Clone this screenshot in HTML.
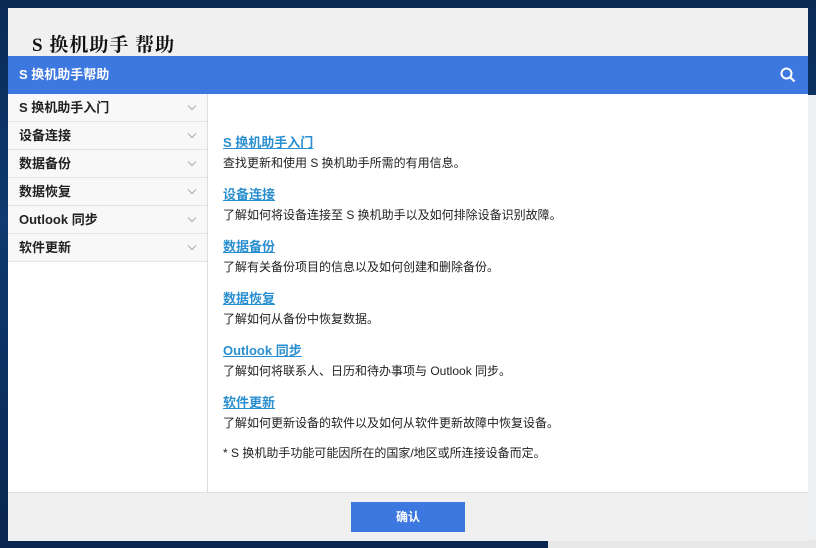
<!DOCTYPE html>
<html><head><meta charset="utf-8"><style>
body{margin:0;width:816px;height:548px;overflow:hidden;background:linear-gradient(180deg,#0a2a55 0%,#0d3a70 40%,#0a2650 100%);position:relative;font-family:"Liberation Sans","Noto Sans CJK SC",sans-serif}
.rw{position:absolute;left:808px;top:95px;width:8px;height:453px;background:#eef0f2}
.bot{position:absolute;left:548px;top:540px;width:268px;height:8px;background:#e8e8e8}
.win{position:absolute;left:8px;top:8px;width:800px;height:532px;background:#fff}
.tb{height:48px;background:#f0f0f0;position:relative}
.tb span{position:absolute;left:24px;top:22px;font-size:19px;font-weight:bold;font-family:"Liberation Serif","Noto Serif CJK SC",serif;color:#111;letter-spacing:1px}
.bb{height:38px;background:#3d78e0;color:#fff;font-weight:bold;font-size:13px;line-height:38px;padding-left:11px;position:relative}
.side{position:absolute;left:0;top:86px;width:199px;height:398px;border-right:1px solid #ddd;background:#fff}
.it{height:27px;border-bottom:1px solid #e4e4e4;background:#f8f8f8;font-size:13px;font-weight:bold;color:#222;line-height:27px;padding-left:11px;position:relative}
.it:after{content:"";position:absolute;right:12px;top:9px;width:5px;height:5px;border-right:1px solid #aaa;border-bottom:1px solid #aaa;transform:rotate(45deg)}
.ct{position:absolute;left:215px;top:124px;font-size:12px;color:#222}
.ct a{display:block;color:#2a8fd0;font-weight:bold;font-size:13px;text-decoration:underline;height:22px}
.ct p{margin:0 0 12px 0;height:18px}
.ft{position:absolute;left:0;top:484px;width:800px;height:48px;background:#f0f0f0;border-top:1px solid #e0e0e0}
.btn{position:absolute;left:343px;top:9px;width:114px;height:30px;background:#3d78e0;color:#fff;font-size:12px;font-weight:bold;text-align:center;line-height:30px}
</style></head><body>
<div class="rw"></div><div class="bot"></div>
<div class="win">
<div class="tb"><span>S 换机助手 帮助</span></div>
<div class="bb">S 换机助手帮助
<svg style="position:absolute;right:12px;top:11px" width="16" height="16" viewBox="0 0 16 16"><circle cx="6.5" cy="6.5" r="5" fill="none" stroke="#fff" stroke-width="2"/><path d="M10 10l4.5 4.5" stroke="#fff" stroke-width="2.2"/></svg></div>
<div class="side">
<div class="it">S 换机助手入门</div><div class="it">设备连接</div><div class="it">数据备份</div><div class="it">数据恢复</div><div class="it">Outlook 同步</div><div class="it">软件更新</div>
</div>
<div class="ct">
<a>S 换机助手入门</a><p>查找更新和使用 S 换机助手所需的有用信息。</p>
<a>设备连接</a><p>了解如何将设备连接至 S 换机助手以及如何排除设备识别故障。</p>
<a>数据备份</a><p>了解有关备份项目的信息以及如何创建和删除备份。</p>
<a>数据恢复</a><p>了解如何从备份中恢复数据。</p>
<a>Outlook 同步</a><p>了解如何将联系人、日历和待办事项与 Outlook 同步。</p>
<a>软件更新</a><p>了解如何更新设备的软件以及如何从软件更新故障中恢复设备。</p>
<p>* S 换机助手功能可能因所在的国家/地区或所连接设备而定。</p>
</div>
<div class="ft"><div class="btn">确认</div></div>
</div>
</body></html>
